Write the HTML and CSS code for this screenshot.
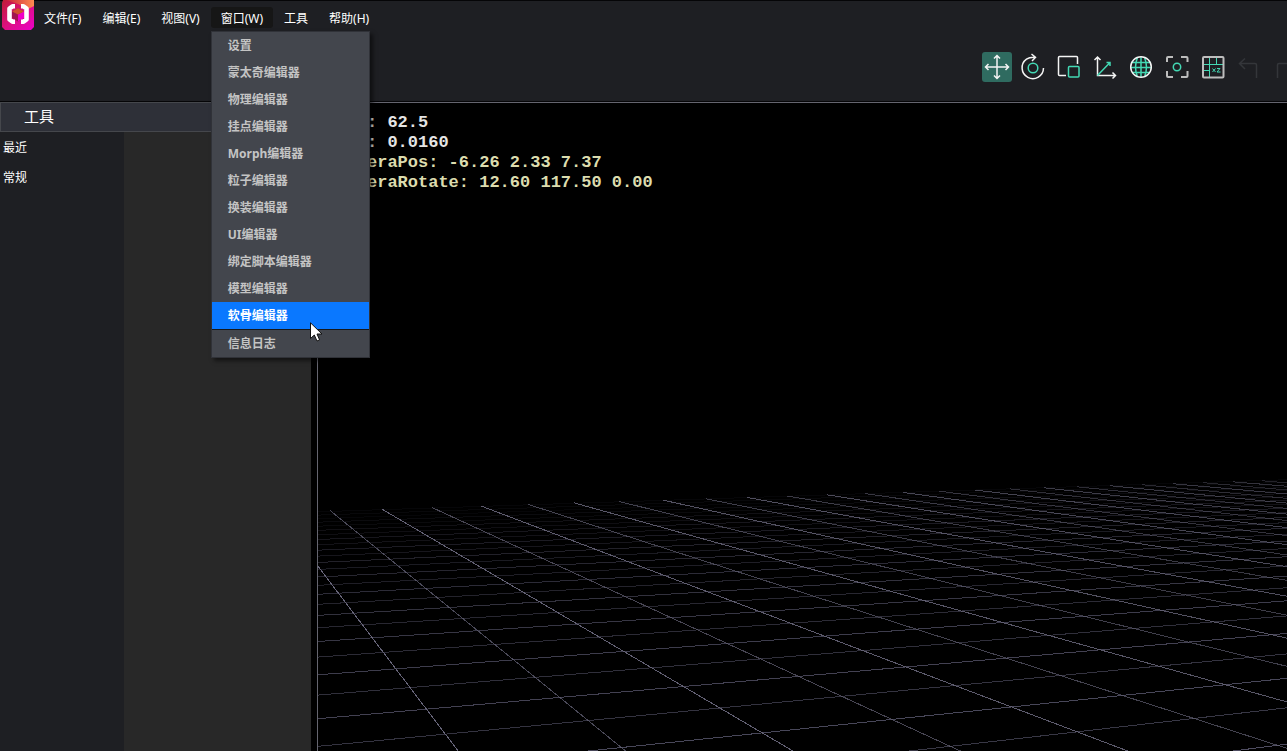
FILE: index.html
```html
<!DOCTYPE html>
<html lang="zh-CN">
<head>
<meta charset="utf-8">
<title>编辑器</title>
<link rel="stylesheet" href="styles.css">
</head>
<body>
<div class="app">
  <header class="header">
    <nav class="menubar" aria-label="主菜单">
      <svg class="logo" viewBox="0 0 32 30" aria-hidden="true">
        <defs>
          <linearGradient id="logo-bg" x1="0" y1="0" x2="1" y2="1">
            <stop offset="0" stop-color="#c01c34"/>
            <stop offset=".5" stop-color="#dc1080"/>
            <stop offset="1" stop-color="#ec00c8"/>
          </linearGradient>
          <linearGradient id="logo-top" x1="0" y1="0" x2="1" y2="0">
            <stop offset="0" stop-color="#c8203c"/>
            <stop offset="1" stop-color="#ff8c50"/>
          </linearGradient>
        </defs>
        <path d="M1 0H32V27L29 30H3L0 27V3Z" fill="url(#logo-bg)"/>
        <path d="M4 0H32V6L26 9L16 4Z" fill="url(#logo-top)"/>
        <path d="M16 8L22 11.500V18L16 21.500L10 18V11.500Z" fill="#a01450"/>
        <path d="M16 14.500L22 11V18L16 21.500Z" fill="#f000c8"/>
        <path d="M16 14.500L10 11.500L16 8L22 11.500Z" fill="#d2502e"/>
        <path d="M13 6.300H10.500L7.500 8.500V19.500L10.500 21.700H13M19 6.300H21.500L24.500 8.500V19.500L21.500 21.700H19" fill="none" stroke="#fff" stroke-width="4.600" stroke-linejoin="round"/>
      </svg>
      <ul class="menus">
        <li><button class="menu-button" type="button">文件(F)</button></li>
        <li><button class="menu-button" type="button">编辑(E)</button></li>
        <li><button class="menu-button" type="button">视图(V)</button></li>
        <li class="menu-open">
          <button class="menu-button menu-button-active" type="button" aria-expanded="true">窗口(W)</button>
          <ul class="dropdown">
            <li><button class="entry" type="button">设置</button></li>
            <li><button class="entry" type="button">蒙太奇编辑器</button></li>
            <li><button class="entry" type="button">物理编辑器</button></li>
            <li><button class="entry" type="button">挂点编辑器</button></li>
            <li><button class="entry" type="button">Morph编辑器</button></li>
            <li><button class="entry" type="button">粒子编辑器</button></li>
            <li><button class="entry" type="button">换装编辑器</button></li>
            <li><button class="entry" type="button">UI编辑器</button></li>
            <li><button class="entry" type="button">绑定脚本编辑器</button></li>
            <li><button class="entry" type="button">模型编辑器</button></li>
            <li><button class="entry entry-hover" type="button">软骨编辑器</button></li>
            <li class="separated"><button class="entry" type="button">信息日志</button></li>
          </ul>
          <svg class="cursor" viewBox="0 0 13 20" aria-hidden="true">
            <path d="M.5 .8V16.500L4.300 13L7 19L9.600 17.900L7 12H12Z" fill="#fff" stroke="#111"/>
          </svg>
        </li>
        <li><button class="menu-button" type="button">工具</button></li>
        <li><button class="menu-button" type="button">帮助(H)</button></li>
      </ul>
    </nav>
    <div class="toolbar" role="toolbar" aria-label="视口工具">
      <button class="tool tool-active" type="button" aria-label="移动">
        <svg viewBox="0 0 30 30"><path d="M15 4V26M4 15H26M12 6.500L15 3.500L18 6.500M12 23.500L15 26.500L18 23.500M6.500 12L3.500 15L6.500 18M23.500 12L26.500 15L23.500 18" class="white"/></svg>
      </button>
      <button class="tool" type="button" aria-label="旋转">
        <svg viewBox="0 0 30 30"><path d="M8.500 7.200A10.700 10.700 0 1 0 25.500 16M8.500 7.200Q11.500 5 17 5.300M13.500 2L17.500 5.300L14 9" class="white"/><circle cx="15" cy="16" r="4.800" class="teal"/></svg>
      </button>
      <button class="tool" type="button" aria-label="缩放">
        <svg viewBox="0 0 30 30"><path d="M12 23.500H5.500Q4.500 23.500 4.500 22.500V5.500Q4.500 4.500 5.500 4.500H22.500Q23.500 4.500 23.500 5.500V12" class="white"/><rect x="14.500" y="14.500" width="10.500" height="10.500" rx="1" class="teal"/></svg>
      </button>
      <button class="tool" type="button" aria-label="坐标系">
        <svg viewBox="0 0 30 30"><path d="M7.500 5V23.500H25M4.500 8L7.500 5L10.500 8M22.500 20.500L25.500 23.500L22.500 26.500" class="white"/><path d="M7.500 23.500L20 10.500M16.500 10.500H20V14" class="teal"/></svg>
      </button>
      <button class="tool" type="button" aria-label="世界">
        <svg viewBox="0 0 30 30"><path d="M5 10.500H25M4.500 15.500H25.500M6 20.500H24M15 5V25.500M11.500 5.500Q7.500 15 11.500 25M18.500 5.500Q22.500 15 18.500 25" class="teal"/><circle cx="15" cy="15" r="10.300" class="white"/></svg>
      </button>
      <button class="tool" type="button" aria-label="聚焦">
        <svg viewBox="0 0 30 30"><path d="M11 5H6Q5 5 5 6V10M19 5H24.500Q25.500 5 25.500 6V10M5 19V24Q5 25 6 25H11M25.500 19V24Q25.500 25 24.500 25H19" class="gray"/><circle cx="15" cy="15" r="3.700" class="teal"/></svg>
      </button>
      <button class="tool" type="button" aria-label="XZ 网格">
        <svg viewBox="0 0 30 30"><path d="M5 12.500H25M11.500 5V25M18.500 5V12M5 18.500H11M14.500 16.500L17.500 20M17.500 16.500L14.500 20M19 16.500H22L19 20H22.500" class="teal thin"/><rect x="5" y="5" width="20.500" height="20.500" rx="1" class="gray"/></svg>
      </button>
      <button class="tool tool-off" type="button" aria-label="撤销" disabled>
        <svg viewBox="0 0 30 30"><path d="M22.500 26V13Q22.500 11.500 21 11.500H5.500M11 6.500L5.500 11.500L11 17" class="off"/></svg>
      </button>
      <button class="tool tool-off" type="button" aria-label="重做" disabled>
        <svg viewBox="0 0 30 30"><path d="M7.500 26V13Q7.500 11.500 9 11.500H24.500M19 6.500L24.500 11.500L19 17" class="off"/></svg>
      </button>
    </div>
  </header>
  <main class="workspace">
    <aside class="panel">
      <h2 class="panel-title">工具</h2>
      <div class="panel-body">
        <ul class="categories">
          <li><a class="category" href="#recent">最近</a></li>
          <li><a class="category" href="#general">常规</a></li>
        </ul>
        <div class="category-content"></div>
      </div>
    </aside>
    <section class="viewport" aria-label="场景视口">
      <svg class="grid" id="grid" viewBox="318 103 969 648" preserveAspectRatio="xMinYMin slice" aria-hidden="true"></svg>
      <div class="stats">
        <p class="stat">: 62.5</p>
        <p class="stat">: 0.0160</p>
        <p class="stat stat-camera">eraPos: -6.26 2.33 7.37</p>
        <p class="stat stat-camera">eraRotate: 12.60 117.50 0.00</p>
      </div>
    </section>
  </main>
</div>
<script src="grid.js"></script>
</body>
</html>
```
FILE: styles.css
```css
* {
  box-sizing: border-box;
}

body {
  margin: 0;
  background: #1e1f23;
  color: #fff;
  font: 12px/18px "Noto Sans", "Noto Sans CJK SC", sans-serif;
}

ul {
  margin: 0;
  padding: 0;
  list-style: none;
}

button {
  border: 0;
  color: inherit;
  font: inherit;
}

.app {
  display: flex;
  flex-direction: column;
  height: 100vh;
  overflow: hidden;
}

.header {
  border-bottom: 1px solid #050507;
  background: #1e1f23;
}

.menubar {
  display: flex;
  align-items: flex-start;
  height: 36px;
  padding-left: 2px;
  border-top: 1px solid #050507;
}

.logo {
  width: 32px;
  height: 30px;
  margin-top: -1px;
}

.menus {
  display: flex;
  gap: 1px;
  padding-top: 6px;
}

.menu-button {
  display: block;
  height: 21px;
  padding: 2px 10px 0;
  border-radius: 3px;
  background: none;
  line-height: 19px;
}

.menu-button-active {
  background: #161616;
}

.menu-open {
  position: relative;
}

.dropdown {
  position: absolute;
  z-index: 2;
  top: 24px;
  left: 0;
  width: 159px;
  border: 1px solid #303238;
  background: #43464d;
  box-shadow: 3px 3px 4px rgba(0, 0, 0, 0.5);
}

.entry {
  display: block;
  width: 100%;
  height: 27px;
  padding: 0 16px;
  background: none;
  color: #c4c4c4;
  font-weight: 700;
  line-height: 27px;
  text-align: left;
}

.entry-hover {
  background: #0a78ff;
  color: #fff;
}

.separated {
  border-top: 1px solid #16181c;
}

.cursor {
  position: absolute;
  z-index: 3;
  top: 315px;
  left: 99px;
  width: 13px;
  height: 20px;
}

.toolbar {
  display: flex;
  justify-content: flex-end;
  gap: 6px;
  height: 65px;
  margin-right: -13px;
  padding-top: 16px;
}

.tool {
  flex: none;
  width: 30px;
  height: 30px;
  padding: 0;
  border-radius: 3px;
  background: none;
}

.tool svg {
  display: block;
  fill: none;
  stroke-width: 1.5;
}

.tool-active {
  background: #2f6b60;
}

.white {
  stroke: #f4f4f4;
}

.gray {
  stroke: #bdbdbd;
  stroke-width: 2;
}

.teal {
  stroke: #43d9b4;
}

.thin {
  stroke-width: 1;
}

.off {
  stroke: #34363a;
}

.workspace {
  display: flex;
  flex: 1;
  min-height: 0;
  background: #000;
}

.panel {
  display: flex;
  flex: none;
  flex-direction: column;
  width: 311px;
}

.panel-title {
  height: 30px;
  margin: 0;
  padding-left: 23px;
  border: 1px solid #45474c;
  background: #2e3038;
  font-size: 15px;
  font-weight: 400;
  line-height: 26px;
}

.panel-body {
  display: flex;
  flex: 1;
}

.categories {
  width: 124px;
  padding-top: 1px;
  background: #1e1f23;
}

.category {
  display: block;
  padding-left: 3px;
  color: #fff;
  line-height: 30px;
  text-decoration: none;
}

.category-content {
  flex: 1;
  background: #282828;
}

.viewport {
  position: relative;
  flex: 1;
  min-width: 0;
  margin-left: 6px;
  border-top: 1px solid #65656f;
  border-left: 1px solid #65656f;
  background: #000;
}

.grid {
  display: block;
  width: 100%;
  height: 100%;
  stroke-width: 1;
  shape-rendering: crispEdges;
}

.stats {
  position: absolute;
  top: 10px;
  left: 49px;
  font: 700 17px/20px "Liberation Mono", monospace;
}

.stat {
  margin: 0;
  color: #e4e4e4;
}

.stat-camera {
  color: #dcdcae;
}
```
FILE: grid.js
```javascript
// Ground grid: two families of parallel lines in perspective.
const svg = document.getElementById("grid");

function addLine(x1, y1, x2, y2, color, opacity) {
  const line = document.createElementNS("http://www.w3.org/2000/svg", "line");
  const points = { x1, y1, x2, y2 };
  for (const key in points) line.setAttribute(key, points[key].toFixed(1));
  line.setAttribute("stroke", color);
  line.setAttribute("stroke-opacity", opacity.toFixed(2));
  svg.append(line);
}

// Lines running across the view, nearest first, fading towards the horizon.
for (let n = -2; n <= 25; n++) {
  const y = 398.5 + 4034 / (n + 10.6);
  const slope = (y - 387) / 3771;
  const fade = Math.max(0.1, 1 - (n + 2) / 28);
  addLine(318, y, 1287, y - slope * 969, "#4e4c60", fade * (n % 2 ? 0.75 : 1));
}

// Lines running away from the camera to the vanishing point.
for (let m = 0; m <= 26; m++) {
  const run = 0.759 + 0.4702 * m;
  const far = 120.3 / (1 + 0.0321 * run);
  const near = 360;
  addLine(188 + run * far, 395 + far, 188 + run * near, 395 + near,
    "#666478", (1 - m * 0.022) * (m % 2 ? 0.75 : 1));
}
```
